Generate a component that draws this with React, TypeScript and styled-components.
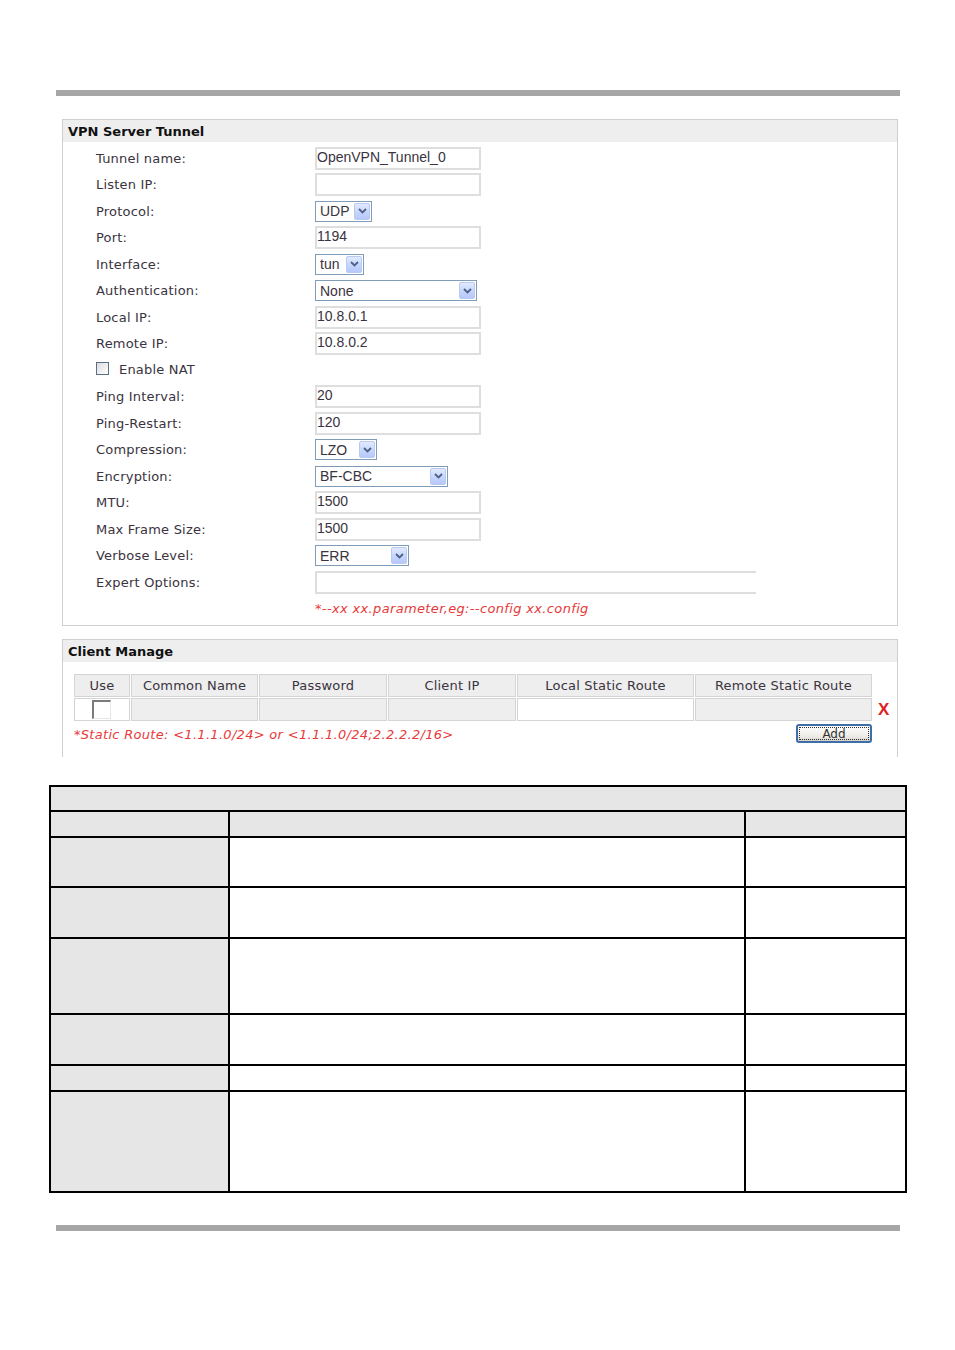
import React from "react";
import styled, { createGlobalStyle } from "styled-components";

const GlobalStyle = createGlobalStyle`
  html, body {
    margin: 0;
    padding: 0;
    background: #ffffff;
  }
  body {
    font-family: "DejaVu Sans", Verdana, sans-serif;
    font-size: 13px;
    color: #333;
  }
`;

const Page = styled.div`
  width: 955px;
  min-height: 1350px;
  padding-top: 90px;
  box-sizing: border-box;
`;

const Rule = styled.div<{ $top: number }>`
  margin: ${(p) => p.$top}px 0 0 56px;
  width: 844px;
  height: 6px;
  background: #a6a6a6;
`;

const Panel = styled.div<{ $top: number; $height?: number; $open?: boolean }>`
  margin: ${(p) => p.$top}px 0 0 62px;
  width: 836px;
  box-sizing: border-box;
  border: 1px solid #cfcfcf;
  ${(p) => (p.$open ? "border-bottom: none;" : "")}
  ${(p) => (p.$height ? `height: ${p.$height}px;` : "")}
`;

const PanelHeader = styled.div`
  height: 22px;
  line-height: 24px;
  background: #eeeeee;
  padding-left: 5px;
  font-weight: bold;
  font-size: 13px;
  color: #111;
`;

const FormGrid = styled.div`
  display: grid;
  grid-template-columns: 219px 1fr;
  grid-auto-rows: 26.5px;
  align-items: center;
  padding: 3px 0 3px 33px;
`;

const Label = styled.div`
  color: #3a3340;
  font-size: 13px;
  letter-spacing: 0.2px;
`;

const CheckRow = styled.label`
  grid-column: 1 / -1;
  display: flex;
  align-items: center;
  gap: 10px;
  color: #3a3340;
  margin-top: -1px;
  letter-spacing: 0.2px;
`;

const SmallBox = styled.span`
  width: 11px;
  height: 11px;
  border: 1px solid #5a6e86;
  background: linear-gradient(135deg, #dcdcdc, #ffffff);
  margin-top: -3px;
`;

const TextInput = styled.div<{ $width: number; $open?: boolean }>`
  width: ${(p) => p.$width}px;
  height: 23px;
  box-sizing: border-box;
  border: 2px solid #dedede;
  ${(p) => (p.$open ? "border-right: none;" : "")}
  font-family: "Liberation Sans", Arial, sans-serif;
  font-size: 14px;
  color: #3a3340;
  line-height: 16px;
  padding-left: 0;
`;

const SelectBox = styled.div<{ $width: number }>`
  width: ${(p) => p.$width}px;
  height: 21px;
  box-sizing: border-box;
  border: 1px solid #7f9db9;
  display: flex;
  align-items: center;
  justify-content: space-between;
  padding: 0 1px 0 4px;
  font-family: "Liberation Sans", Arial, sans-serif;
  font-size: 14px;
  color: #3a3340;
`;

const DropButton = styled.span`
  width: 16px;
  height: 17px;
  box-sizing: border-box;
  border: 1px solid #b9c9ef;
  border-radius: 2px;
  background: linear-gradient(180deg, #e1eafe 0%, #c3d3fd 60%, #b6c9fb 100%);
  display: flex;
  align-items: center;
  justify-content: center;
`;

const Note = styled.div<{ $spacing: number }>`
  color: #e8393a;
  font-style: italic;
  font-size: 13px;
  letter-spacing: ${(p) => p.$spacing}px;
`;

const ClientBody = styled.div`
  padding: 11px 0 0 11px;
`;

const TableLine = styled.div`
  display: flex;
  align-items: flex-end;
  gap: 5px;
`;

const ClientTable = styled.table`
  width: 800px;
  border-collapse: separate;
  border-spacing: 1px;
  margin-left: -1px;
  table-layout: fixed;
`;

const HeadCell = styled.th`
  height: 21px;
  padding: 0;
  background: #eeeeee;
  border: 1px solid #d4d4d4;
  font-weight: normal;
  font-size: 13px;
  color: #3a3340;
  text-align: center;
  letter-spacing: 0.2px;
  overflow: hidden;
  white-space: nowrap;
`;

const DataCell = styled.td<{ $white?: boolean }>`
  height: 21px;
  padding: 0;
  background: ${(p) => (p.$white ? "#ffffff" : "#eeeeee")};
  border: 1px solid #d4d4d4;
  text-align: center;
  vertical-align: middle;
`;

const SunkenBox = styled.span`
  display: inline-block;
  width: 19px;
  height: 19px;
  box-sizing: border-box;
  vertical-align: middle;
  border-top: 2px solid #7a7a7a;
  border-left: 2px solid #7a7a7a;
  border-right: 1px solid #e6e6e6;
  border-bottom: 1px solid #e6e6e6;
  background: #fff;
  margin-left: -2px;
`;

const RemoveMark = styled.span`
  color: #e02121;
  font-family: "Liberation Sans", Arial, sans-serif;
  font-weight: bold;
  font-size: 17px;
  line-height: 17px;
  padding-bottom: 4px;
`;

const FootLine = styled.div`
  width: 798px;
  display: flex;
  justify-content: space-between;
  align-items: flex-start;
`;

const NoteSlot = styled.div`
  padding-top: 5px;
`;

const AddButton = styled.button`
  width: 76px;
  height: 19px;
  box-sizing: border-box;
  border: 2px solid #3d6ea8;
  border-radius: 3px;
  background: linear-gradient(180deg, #ffffff 0%, #ecebe6 70%, #d6d0c5 100%);
  padding: 1px;
  margin-top: 2px;
  font-family: "DejaVu Sans", Verdana, sans-serif;
  font-size: 13px;
  color: #333;
  cursor: pointer;
`;

const FocusRing = styled.span`
  display: block;
  height: 13px;
  box-sizing: border-box;
  border: 1px dotted #333;
  line-height: 12px;
  font-size: 12px;
`;

const GridTable = styled.table`
  margin: 28px 0 0 49px;
  width: 856px;
  border-collapse: collapse;
  table-layout: fixed;
`;

const GridCell = styled.td<{ $shade?: boolean; $h: number }>`
  border: 2px solid #000;
  padding: 0;
  height: ${(p) => p.$h - 2}px;
  background: ${(p) => (p.$shade ? "#e6e6e6" : "#ffffff")};
`;

const Chevron = () => (
  <svg width="9" height="6" viewBox="0 0 9 6">
    <path d="M1 1 L4.5 4.5 L8 1" fill="none" stroke="#4d6185" strokeWidth="1.8" />
  </svg>
);

function Select({ value, width }: { value: string; width: number }) {
  return (
    <SelectBox $width={width}>
      <span>{value}</span>
      <DropButton>
        <Chevron />
      </DropButton>
    </SelectBox>
  );
}

type Field =
  | { label: string; kind: "text"; value: string; width?: number; open?: boolean }
  | { label: string; kind: "select"; value: string; width: number };

const fieldsA: Field[] = [
  { label: "Tunnel name:", kind: "text", value: "OpenVPN_Tunnel_0" },
  { label: "Listen IP:", kind: "text", value: "" },
  { label: "Protocol:", kind: "select", value: "UDP", width: 57 },
  { label: "Port:", kind: "text", value: "1194" },
  { label: "Interface:", kind: "select", value: "tun", width: 49 },
  { label: "Authentication:", kind: "select", value: "None", width: 162 },
  { label: "Local IP:", kind: "text", value: "10.8.0.1" },
  { label: "Remote IP:", kind: "text", value: "10.8.0.2" },
];

const fieldsB: Field[] = [
  { label: "Ping Interval:", kind: "text", value: "20" },
  { label: "Ping-Restart:", kind: "text", value: "120" },
  { label: "Compression:", kind: "select", value: "LZO", width: 62 },
  { label: "Encryption:", kind: "select", value: "BF-CBC", width: 133 },
  { label: "MTU:", kind: "text", value: "1500" },
  { label: "Max Frame Size:", kind: "text", value: "1500" },
  { label: "Verbose Level:", kind: "select", value: "ERR", width: 94 },
  { label: "Expert Options:", kind: "text", value: "", width: 441, open: true },
];

function renderField(f: Field) {
  return (
    <React.Fragment key={f.label}>
      <Label>{f.label}</Label>
      {f.kind === "select" ? (
        <Select value={f.value} width={f.width} />
      ) : (
        <TextInput $width={f.width ?? 166} $open={f.open}>
          {f.value}
        </TextInput>
      )}
    </React.Fragment>
  );
}

const clientCols = [
  { title: "Use", w: 56 },
  { title: "Common Name", w: 127 },
  { title: "Password", w: 128 },
  { title: "Client IP", w: 128 },
  { title: "Local Static Route", w: 177 },
  { title: "Remote Static Route", w: 177 },
];

const gridRows = [50, 51, 76, 51, 26, 101];

export default function App() {
  return (
    <Page>
      <GlobalStyle />
      <Rule $top={0} />

      <Panel $top={23}>
        <PanelHeader>VPN Server Tunnel</PanelHeader>
        <FormGrid>
          {fieldsA.map(renderField)}
          <CheckRow>
            <SmallBox />
            Enable NAT
          </CheckRow>
          {fieldsB.map(renderField)}
          <span />
          <Note $spacing={0.35}>*--xx xx.parameter,eg:--config xx.config</Note>
        </FormGrid>
      </Panel>

      <Panel $top={13} $height={118} $open>
        <PanelHeader>Client Manage</PanelHeader>
        <ClientBody>
          <TableLine>
            <ClientTable>
              <colgroup>
                {clientCols.map((c) => (
                  <col key={c.title} style={{ width: c.w }} />
                ))}
              </colgroup>
              <thead>
                <tr>
                  {clientCols.map((c) => (
                    <HeadCell key={c.title}>{c.title}</HeadCell>
                  ))}
                </tr>
              </thead>
              <tbody>
                <tr>
                  <DataCell $white>
                    <SunkenBox />
                  </DataCell>
                  <DataCell />
                  <DataCell />
                  <DataCell />
                  <DataCell $white />
                  <DataCell />
                </tr>
              </tbody>
            </ClientTable>
            <RemoveMark>X</RemoveMark>
          </TableLine>
          <FootLine>
            <NoteSlot>
              <Note $spacing={0.3}>
                *Static Route: &lt;1.1.1.0/24&gt; or &lt;1.1.1.0/24;2.2.2.2/16&gt;
              </Note>
            </NoteSlot>
            <AddButton type="button">
              <FocusRing>Add</FocusRing>
            </AddButton>
          </FootLine>
        </ClientBody>
      </Panel>

      <GridTable>
        <colgroup>
          <col style={{ width: 179 }} />
          <col style={{ width: 516 }} />
          <col style={{ width: 161 }} />
        </colgroup>
        <tbody>
          <tr>
            <GridCell colSpan={3} $shade $h={25} />
          </tr>
          <tr>
            <GridCell $shade $h={26} />
            <GridCell $shade $h={26} />
            <GridCell $shade $h={26} />
          </tr>
          {gridRows.map((h, i) => (
            <tr key={i}>
              <GridCell $shade $h={h} />
              <GridCell $h={h} />
              <GridCell $h={h} />
            </tr>
          ))}
        </tbody>
      </GridTable>

      <Rule $top={32} />
    </Page>
  );
}
